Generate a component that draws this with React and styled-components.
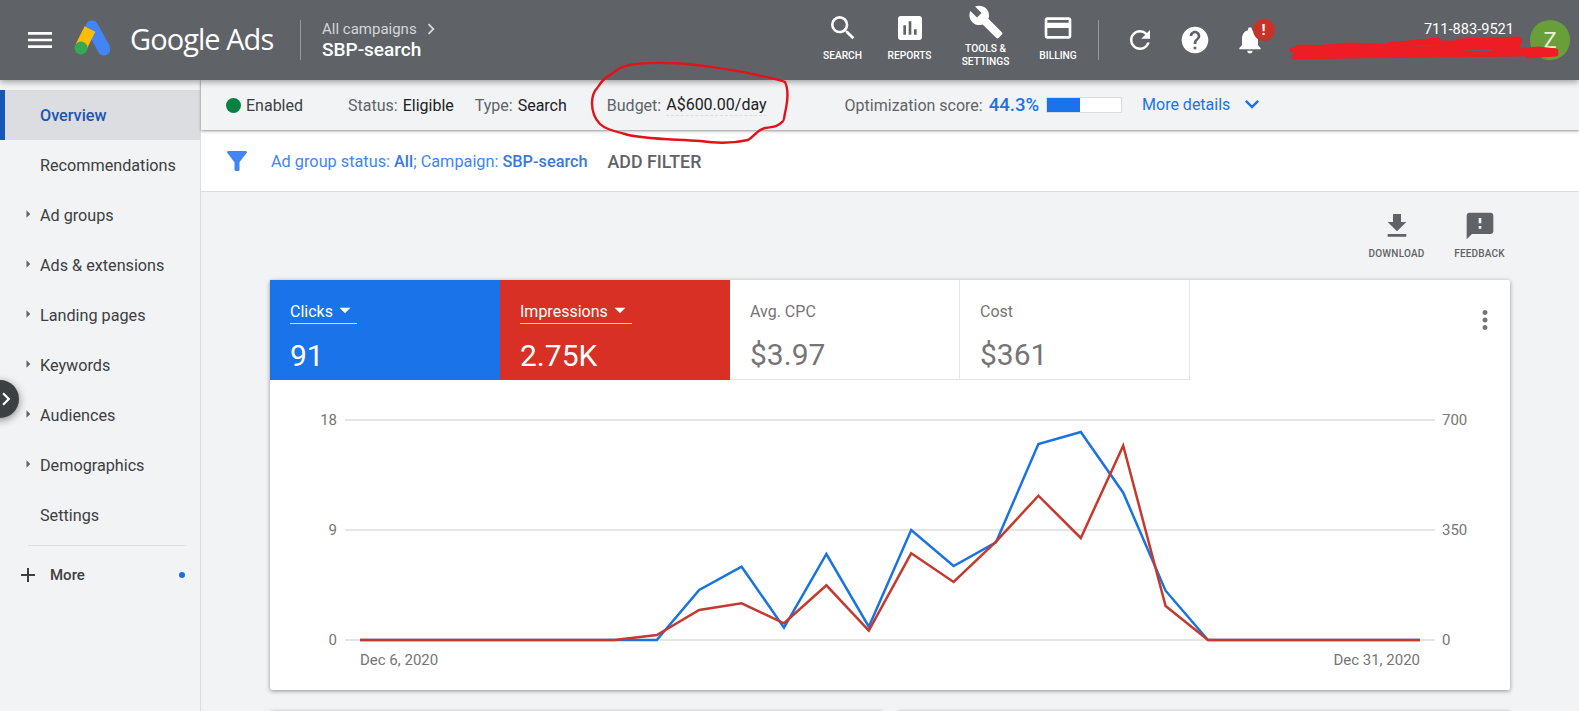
import React from 'react';
import styled, { createGlobalStyle } from 'styled-components';
import {
  MdMenu, MdSearch, MdAssessment, MdBuild, MdCreditCard, MdRefresh, MdHelp, MdNotifications,
  MdFileDownload, MdFeedback, MdMoreVert, MdFilterAlt, MdKeyboardArrowDown, MdChevronRight,
  MdAdd, MdArrowRight, MdArrowDropDown,
} from 'react-icons/md';

const Global = createGlobalStyle`
  html, body { margin: 0; height: 100%; overflow: hidden; background: #f1f3f4; }
  body { font-family: Roboto, "Liberation Sans", sans-serif; color: #3c4043; }
  #root { height: 100%; }
`;

const Page = styled.div`position: relative; width: 1579px; height: 711px; overflow: hidden; background: #f1f3f4;`;
const Header = styled.header`
  position: relative; z-index: 3; display: flex; align-items: center; height: 80px; background: #5f6368; color: #fff;
  box-shadow: 0 2px 6px rgba(0,0,0,.35);
`;
const MenuBtn = styled.div`display: flex; margin-left: 24px; width: 32px; color: #fff;`;
const Logo = styled.svg`margin-left: 14px; width: 40px; height: 40px; flex: none;`;
const Brand = styled.div`margin: -4px 0 0 20px; font: 400 29px "Open Sans", Roboto, sans-serif; letter-spacing: -.95px; white-space: nowrap; width: 170px;`;
const VRule = styled.div`width: 1px; height: 40px; background: rgba(255,255,255,.35); flex: none; margin-left: ${p => p.$ml || 0}px;`;
const Crumbs = styled.div`margin-left: 21px; display: flex; flex-direction: column; margin-top: -3px;`;
const CrumbTop = styled.div`display: flex; align-items: center; font-size: 15px; color: #d4d6d8; line-height: 20px;`;
const CrumbName = styled.div`font-size: 19px; font-weight: 500; line-height: 20px;`;
const RightGroup = styled.div`margin-left: auto; display: flex; align-items: center; height: 100%;`;
const NavItem = styled.div`
  width: ${p => p.$w}px; box-sizing: border-box; padding: 0 ${p => p.$pr || 0}px 0 ${p => p.$pl || 0}px;
  align-self: flex-start; margin-top: ${p => p.$mt}px; display: flex; flex-direction: column; align-items: center; text-align: center;
  font-size: 10.2px; font-weight: 500; line-height: 13px; color: #fff;
`;
const NavIcon = styled.div`display: flex; height: ${p => p.$h}px; align-items: center; margin-bottom: ${p => p.$mb}px;`;
const IconBtn = styled.div`position: relative; width: 55px; display: flex; justify-content: center; color: #fff; margin-left: ${p => p.$ml || 0}px;`;
const Badge = styled.div`
  position: absolute; left: 30px; top: -5px; width: 22px; height: 22px; border-radius: 50%; background: #c5332b;
  color: #fff; font-size: 15px; font-weight: 700; display: flex; align-items: center; justify-content: center;
`;
const Account = styled.div`width: 236.5px; align-self: flex-start; padding-top: 20px; text-align: right; font-size: 14.6px; line-height: 18px; color: #fff;`;
const Avatar = styled.div`
  margin: 0 9px 0 16px; width: 40px; height: 40px; border-radius: 50%; background: #689f38; color: #e8f0d8;
  display: flex; align-items: center; justify-content: center; font-size: 22px;
`;
const Scribble = styled.svg`position: absolute; left: 1288px; top: 34px; width: 275px; height: 30px; z-index: 4;`;
const Ellipse = styled.svg`position: absolute; left: 588px; top: 58px; width: 204px; height: 90px; z-index: 4;`;

const Body = styled.div`display: flex; height: 631px;`;
const Sidebar = styled.nav`width: 200px; flex: none; padding-top: 10px; border-right: 1px solid #dadce0; box-sizing: content-box; background: #f1f3f4;`;
const SideItem = styled.div`
  position: relative; height: 50px; display: flex; align-items: center; font-size: 16.2px;
  color: ${p => p.$active ? '#1a56b0' : '#3c4043'}; font-weight: ${p => p.$active ? 500 : 400};
  background: ${p => p.$active ? '#dcdde0' : 'transparent'};
  border-left: ${p => p.$active ? '5px solid #1558b8' : '0'}; padding-left: ${p => p.$active ? 35 : 40}px;
`;
const Caret = styled.span`position: absolute; left: 19px; top: 15px; display: flex; color: #5f6368;`;
const SideRule = styled.div`margin: 5px 14px 0 28px; height: 1px; background: #dfe1e4;`;
const MoreRow = styled.div`display: flex; align-items: center; height: 58px; padding-left: 16px; font-size: 15px; font-weight: 500; color: #3c4043;`;
const MoreLabel = styled.span`margin-left: 10px;`;
const Dot = styled.span`margin-left: auto; margin-right: 15px; width: 6px; height: 6px; border-radius: 50%; background: #1a6fe0;`;
const Rail = styled.div`
  position: absolute; left: -19px; top: 380px; width: 38px; height: 38px; border-radius: 50%; background: #3c4043; z-index: 2;
  box-shadow: 0 2px 8px rgba(0,0,0,.45); display: flex; align-items: center; justify-content: flex-end; color: #fff;
`;

const Main = styled.main`flex: 1; min-width: 0;`;
const Summary = styled.div`
  position: relative; z-index: 1; height: 50px; display: flex; align-items: center; background: #f1f3f4; font-size: 16px; white-space: nowrap;
  padding-left: 25px; box-shadow: 0 1px 3px rgba(0,0,0,.4);
`;
const StatusDot = styled.span`width: 15px; height: 15px; border-radius: 50%; background: #0b8043; margin-right: 5px; flex: none;`;
const Field = styled.span`margin-left: ${p => p.$ml || 0}px; color: #5f6368;`;
const Val = styled.span`margin-left: 5px; color: #202124; ${p => p.$dotted && 'border-bottom: 1px dashed #dcdee0; padding-bottom: 1px; margin-top: 1px;'}`;
const Score = styled.span`margin-left: 6px; color: #1a73e8; font-size: 18.5px; font-weight: 500;`;
const Meter = styled.span`margin-left: 7px; width: 76px; height: 16px; background: #fff; border: 1px solid #dadce0; box-sizing: border-box; display: inline-block;`;
const MeterFill = styled.span`display: block; height: 100%; background: #1a73e8;`;
const MoreDetails = styled.span`margin-left: 20px; color: #1a73e8; display: flex; align-items: center; gap: 8px; margin-top: -2px;`;
const FilterBar = styled.div`height: 60px; display: flex; align-items: center; background: #fff; border-bottom: 1px solid #dadce0; padding-left: 21px; margin-top: 1px;`;
const FilterText = styled.div`margin-left: 19px; font-size: 16.3px; color: #4285f4; white-space: nowrap;`;
const FilterStrong = styled.b`font-weight: 500; color: #3a78e0;`;
const AddFilter = styled.div`margin-left: 20px; font-size: 17.8px; font-weight: 500; color: #5f6368;`;
const Tools = styled.div`height: 88px; display: flex; justify-content: flex-end; width: 1320px; padding-top: 19px; box-sizing: border-box;`;
const ToolBtn = styled.div`width: 83px; display: flex; flex-direction: column; align-items: center; font-size: 10px; font-weight: 500; color: #5f6368; letter-spacing: .2px;`;
const ToolIcon = styled.div`height: 30px; display: flex; align-items: center; color: #5f6368; margin-bottom: 7px;`;
const Card = styled.section`margin-left: 69px; width: 1240px; height: 410px; background: #fff; border-radius: 2px; box-shadow: 0 1px 4px rgba(0,0,0,.4);`;
const TabRow = styled.div`position: relative; display: flex; height: 100px;`;
const Tab = styled.div`
  width: 230px; box-sizing: border-box; padding: 20px 0 0 20px; background: ${p => p.$bg || '#fff'}; color: ${p => p.$bg ? '#fff' : '#757575'};
  ${p => !p.$bg && 'border-right: 1px solid #e4e5e7; border-bottom: 1px solid #e4e5e7;'}
`;
const TabLabel = styled.div`display: inline-flex; align-items: center; height: 22px; font-size: 16px; padding-bottom: 1px; ${p => p.$line && 'border-bottom: 1px solid rgba(255,255,255,.75);'}`;
const TabValue = styled.div`margin-top: 14px; font-size: 30px; line-height: 36px;`;
const Kebab = styled.div`position: absolute; right: 10px; top: 25px; display: flex; color: #757575;`;
const Chart = styled.svg`display: block; width: 1240px; height: 310px;`;
const Lower = styled.div`margin: 21px 0 0 69px; width: 1240px; display: flex; gap: 15px;`;
const LowerCard = styled.div`flex: 1; height: 30px; background: #fff; box-shadow: 0 1px 4px rgba(0,0,0,.35); border-radius: 2px;`;

const X = i => 90 + 42.4 * i;
const blue = [640,640,640,640,640,640,640,640,590,566.7,627.7,554,626.7,530,566,542.3,444,432,492.7,590.7,640,640,640,640,640,640];
const red = [640,640,640,640,640,640,640,635,610,603.3,623.3,585.3,630.7,553.3,582,541.7,495.7,538,445.7,606,640,640,640,640,640,640];
const pts = a => a.map((y, i) => `${X(i)},${y - 380}`).join(' ');

const sideItems = [
  ['Recommendations', false], ['Ad groups', true], ['Ads & extensions', true], ['Landing pages', true],
  ['Keywords', true], ['Audiences', true], ['Demographics', true], ['Settings', false],
];

export default function App() {
  return (
    <Page>
      <Global />
      <Header>
        <MenuBtn><MdMenu size={32} /></MenuBtn>
        <Logo viewBox="0 0 40 40">
          <path d="M22 7 L34 29" stroke="#4285f4" strokeWidth="13" strokeLinecap="round" fill="none" />
          <path d="M20 9 L11 27" stroke="#fbbc04" strokeWidth="12" fill="none" />
          <circle cx="11" cy="28" r="6.5" fill="#34a853" />
        </Logo>
        <Brand>Google Ads</Brand>
        <VRule />
        <Crumbs>
          <CrumbTop>All campaigns<MdChevronRight size={22} style={{ marginLeft: 3 }} /></CrumbTop>
          <CrumbName>SBP-search</CrumbName>
        </Crumbs>
        <RightGroup>
          <NavItem $w={66} $mt={12}><NavIcon $h={32} $mb={5}><MdSearch size={32} /></NavIcon>SEARCH</NavItem>
          <NavItem $w={72} $pr={4} $mt={12}><NavIcon $h={32} $mb={5}><MdAssessment size={32} /></NavIcon>REPORTS</NavItem>
          <NavItem $w={74} $pl={2} $mt={4}><NavIcon $h={36} $mb={2}><MdBuild size={36} /></NavIcon>TOOLS &amp;<br />SETTINGS</NavItem>
          <NavItem $w={73} $mt={12}><NavIcon $h={32} $mb={5}><MdCreditCard size={32} /></NavIcon>BILLING</NavItem>
          <VRule $ml={3} />
          <IconBtn $ml={14}><MdRefresh size={30} /></IconBtn>
          <IconBtn><MdHelp size={32} /></IconBtn>
          <IconBtn><MdNotifications size={32} /><Badge>!</Badge></IconBtn>
          <Account>711-883-9521</Account>
          <Avatar>Z</Avatar>
        </RightGroup>
      </Header>
      <Scribble viewBox="0 0 275 30">
        <path d="M4 16 L60 11 L110 13 L130 9 L190 9 L232 7 L224 18 L250 15 L268 17 L232 20 L150 21 L60 22 L6 23 L70 16 L170 14 L230 12 L200 20 L120 17 L50 18 L8 20 M10 13 L90 15 M100 11 L150 6 M170 7 L230 5 M236 16 L268 20 L240 22"
          stroke="#ee1c25" strokeWidth="5" fill="none" strokeLinejoin="round" strokeLinecap="round" />
      </Scribble>
      <Ellipse viewBox="588 58 204 90">
        <path d="M598 87 C603 78 608 76 613 73 C620 66 632 62 667 63 C690 63 735 70 757 75 C770 78 782 80 785 82 C788 88 788 100 785 113 C784 118 784 122 782 122 C778 127 772 127 765 128 C757 130 755 136 748 140 C735 143 720 144 700 141 C670 139 640 139 625 134 C610 130 604 128 600 124 C594 118 592 112 592 103 C592 96 595 90 598 87"
          stroke="#e3121a" strokeWidth="2.4" fill="none" />
      </Ellipse>
      <Body>
        <Sidebar>
          <SideItem $active>Overview</SideItem>
          {sideItems.map(([t, c]) => (
            <SideItem key={t}>{c && <Caret><MdArrowRight size={18} /></Caret>}{t}</SideItem>
          ))}
          <SideRule />
          <MoreRow><MdAdd size={24} /><MoreLabel>More</MoreLabel><Dot /></MoreRow>
        </Sidebar>
        <Main>
          <Summary>
            <StatusDot />Enabled
            <Field $ml={45}>Status:</Field><Val>Eligible</Val>
            <Field $ml={21}>Type:</Field><Val>Search</Val>
            <Field $ml={40}>Budget:</Field><Val $dotted>A$600.00/day</Val>
            <Field $ml={78}>Optimization score:</Field><Score>44.3%</Score>
            <Meter><MeterFill style={{ width: '44.3%' }} /></Meter>
            <MoreDetails>More details <MdKeyboardArrowDown size={28} /></MoreDetails>
          </Summary>
          <FilterBar>
            <MdFilterAlt size={30} color="#4285f4" />
            <FilterText>Ad group status: <FilterStrong>All</FilterStrong>; Campaign: <FilterStrong>SBP-search</FilterStrong></FilterText>
            <AddFilter>ADD FILTER</AddFilter>
          </FilterBar>
          <Tools>
            <ToolBtn><ToolIcon><MdFileDownload size={32} /></ToolIcon>DOWNLOAD</ToolBtn>
            <ToolBtn><ToolIcon><MdFeedback size={32} /></ToolIcon>FEEDBACK</ToolBtn>
          </Tools>
          <Card>
            <TabRow>
              <Tab $bg="#1a73e8"><TabLabel $line>Clicks<MdArrowDropDown size={26} style={{ margin: '-2px -1px 0 -1px' }} /></TabLabel><TabValue>91</TabValue></Tab>
              <Tab $bg="#d93025"><TabLabel $line>Impressions<MdArrowDropDown size={26} style={{ margin: '-2px -1px 0 -1px' }} /></TabLabel><TabValue>2.75K</TabValue></Tab>
              <Tab><TabLabel>Avg. CPC</TabLabel><TabValue>$3.97</TabValue></Tab>
              <Tab><TabLabel>Cost</TabLabel><TabValue>$361</TabValue></Tab>
              <Kebab><MdMoreVert size={30} /></Kebab>
            </TabRow>
            <Chart viewBox="0 0 1240 310">
              {[40, 150, 260].map(y => <line key={y} x1="75" x2="1165" y1={y} y2={y} stroke="#e4e5e7" strokeWidth="2" />)}
              <g fontFamily="Roboto, sans-serif" fontSize="15" fill="#757575">
                <text x="67" y="45" textAnchor="end">18</text>
                <text x="67" y="155" textAnchor="end">9</text>
                <text x="67" y="265" textAnchor="end">0</text>
                <text x="1172" y="45">700</text>
                <text x="1172" y="155">350</text>
                <text x="1172" y="265">0</text>
                <text x="90" y="285">Dec 6, 2020</text>
                <text x="1150" y="285" textAnchor="end">Dec 31, 2020</text>
              </g>
              <polyline points={pts(blue)} fill="none" stroke="#1a73e0" strokeWidth="2.5" />
              <polyline points={pts(red)} fill="none" stroke="#c5392e" strokeWidth="2.5" />
            </Chart>
          </Card>
          <Lower><LowerCard /><LowerCard /></Lower>
        </Main>
      </Body>
      <Rail><MdChevronRight size={26} /></Rail>
    </Page>
  );
}
